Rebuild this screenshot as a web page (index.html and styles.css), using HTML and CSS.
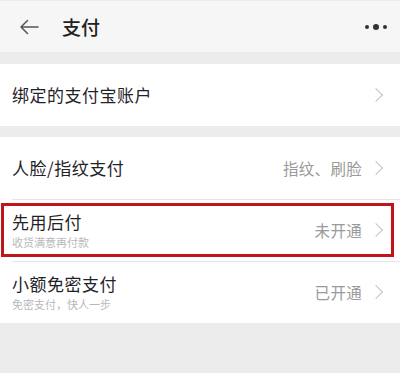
FILE: index.html
```html
<!DOCTYPE html>
<html lang="zh">
<head>
<meta charset="utf-8">
<link rel="stylesheet" href="styles.css">
</head>
<body>
<div class="page">
  <header class="topbar">
    <svg class="back" width="20" height="16" viewBox="0 0 20 16"><path d="M19 8H2M8.5 1.5L2 8l6.5 6.5" fill="none" stroke="#555" stroke-width="1.5" stroke-linecap="round" stroke-linejoin="round"/></svg>
    <h1 class="title">支付</h1>
    <svg class="more" width="24" height="8" viewBox="0 0 24 8"><circle cx="3" cy="4" r="2" fill="#333"/><circle cx="12" cy="4" r="3" fill="#333"/><circle cx="21" cy="4" r="2" fill="#333"/></svg>
  </header>

  <section class="group">
    <div class="row">
      <div class="main"><div class="name">绑定的支付宝账户</div></div>
      <span class="chev"></span>
    </div>
  </section>

  <section class="group">
    <div class="row">
      <div class="main"><div class="name">人脸/指纹支付</div></div>
      <span class="value">指纹、刷脸</span>
      <span class="chev"></span>
    </div>
    <div class="row marked">
      <div class="main"><div class="name">先用后付</div><div class="sub">收货满意再付款</div></div>
      <span class="value">未开通</span>
      <span class="chev"></span>
      <div class="highlight"></div>
    </div>
    <div class="row">
      <div class="main"><div class="name">小额免密支付</div><div class="sub">免密支付，快人一步</div></div>
      <span class="value">已开通</span>
      <span class="chev"></span>
    </div>
  </section>
</div>
</body>
</html>
```

FILE: styles.css
```css
html, body {
  margin: 0;
  padding: 0;
}
body {
  background: #ececec;
  font-family: "Noto Sans CJK SC", "Noto Sans", sans-serif;
  width: 400px;
  height: 373px;
  overflow: hidden;
}
.page {
  display: flex;
  flex-direction: column;
}
.topbar {
  height: 52px;
  background: #f6f6f6;
  display: flex;
  align-items: center;
  padding: 0 12px 0 19px;
  border-top: 1px solid #ececec;
  box-sizing: border-box;
}
.back {
  margin-right: 23px;
}
.title {
  margin: 0;
  font-size: 19px;
  font-weight: 500;
  color: #222;
  flex: 1;
}
.group {
  margin-top: 12px;
  background: #fff;
}
.group + .group {
  margin-top: 11px;
}
.row {
  position: relative;
  height: 62px;
  display: flex;
  align-items: center;
  padding: 0 19px 0 12px;
}
.row + .row::before {
  content: "";
  position: absolute;
  top: 0;
  left: 12px;
  right: 0;
  height: 1px;
  background: #e4e4e4;
}
.main {
  flex: 1;
  display: flex;
  flex-direction: column;
}
.name {
  font-size: 17px;
  line-height: 22px;
  color: #1f2329;
  letter-spacing: 0.5px;
}
.sub {
  font-size: 11px;
  line-height: 15px;
  color: #b9b9b9;
  margin-top: 2px;
}
.value {
  font-size: 15.5px;
  color: #9a9a9a;
  margin-right: 9px;
  letter-spacing: 0.3px;
}
.chev {
  width: 9px;
  height: 9px;
  border-right: 1.3px solid #c2c2c2;
  border-top: 1.3px solid #c2c2c2;
  transform: rotate(45deg);
}
.highlight {
  position: absolute;
  top: 4px;
  left: 1px;
  right: 6px;
  bottom: 4px;
  border: 3px solid #c0161a;
  pointer-events: none;
}
```
